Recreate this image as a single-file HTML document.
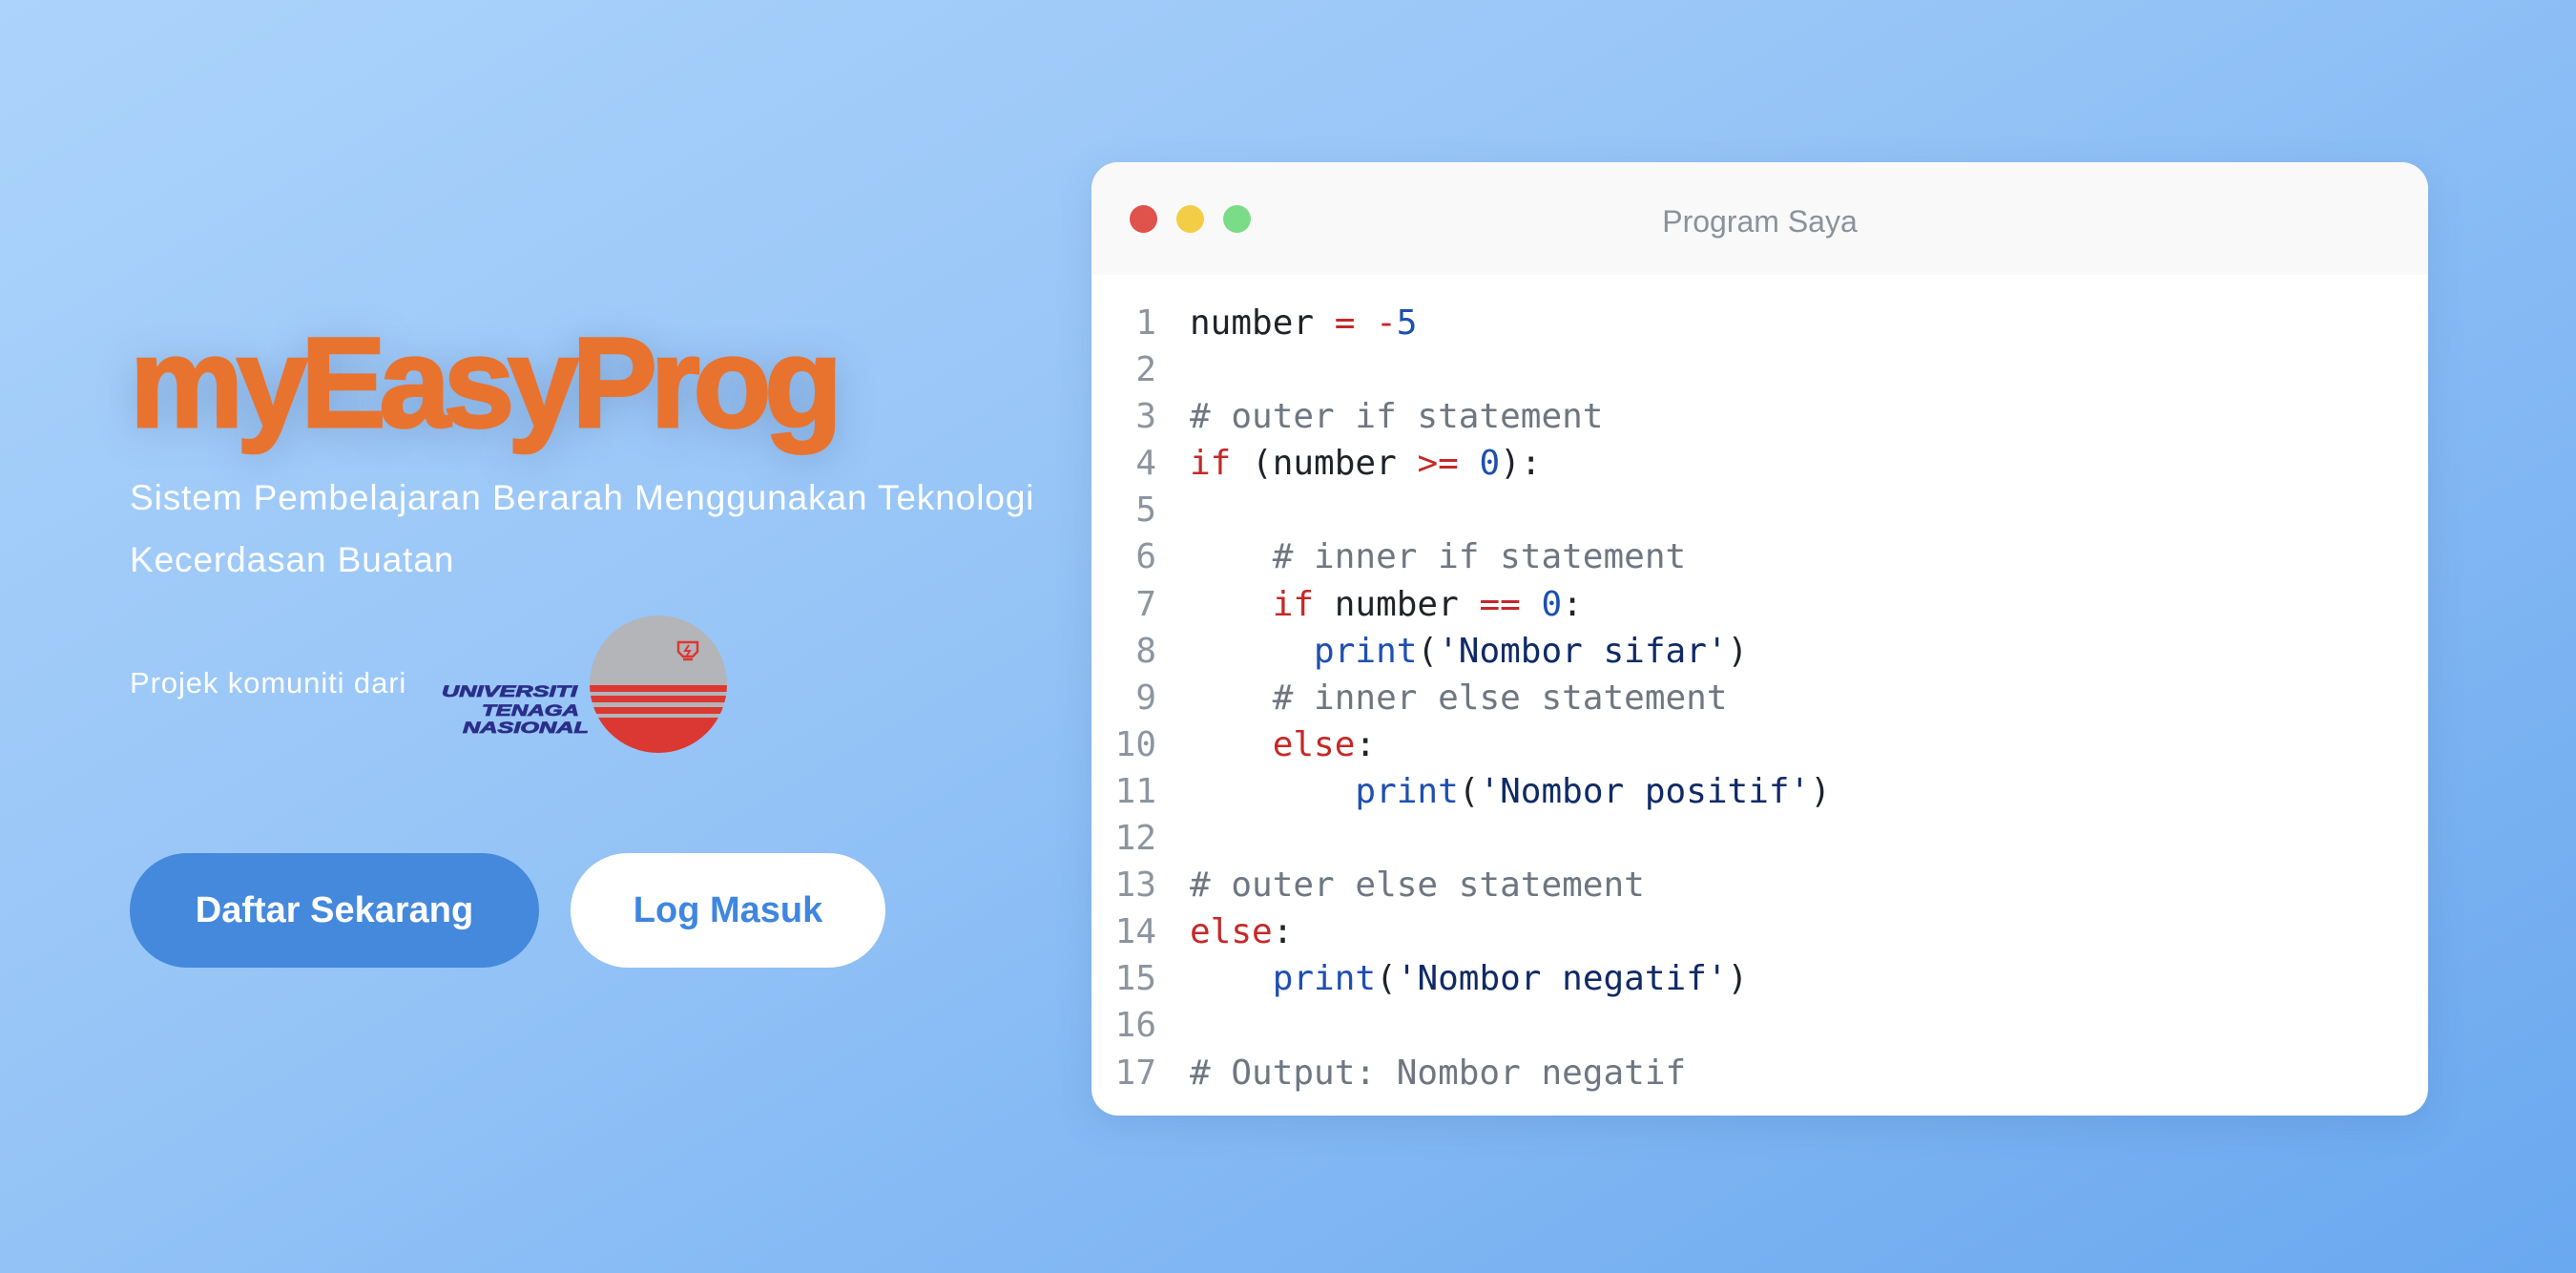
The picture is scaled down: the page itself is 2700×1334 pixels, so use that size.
<!DOCTYPE html>
<html><head><meta charset="utf-8"><style>
*{margin:0;padding:0;box-sizing:border-box}
html,body{width:2700px;height:1334px;overflow:hidden}
body{background:linear-gradient(150deg,#acd3fb 0%,#97c5f7 40%,#6aa8ef 100%);font-family:"Liberation Sans",sans-serif;position:relative}
.title{position:absolute;left:136px;top:322px;font-size:134px;font-weight:bold;color:#e8732f;letter-spacing:-7.2px;-webkit-text-stroke:3px #e8732f;text-shadow:0 6px 40px rgba(60,90,140,.35);line-height:160px}
.sub{position:absolute;left:136px;top:489px;font-size:37px;letter-spacing:0.9px;line-height:65px;color:#fff;width:1150px}
.proj{position:absolute;left:136px;top:698px;font-size:31px;letter-spacing:0.9px;color:#fff}
.btn{position:absolute;top:894px;height:120px;border-radius:60px;font-size:38px;font-weight:bold;display:flex;align-items:center;justify-content:center}
.b1{left:136px;width:429px;background:#4589dd;color:#fff}
.b2{left:598px;width:330px;background:#fff;color:#3f86e0}
.win{position:absolute;left:1144px;top:170px;width:1401px;height:999px;background:#fff;border-radius:28px;overflow:hidden;box-shadow:0 10px 40px rgba(40,80,140,.15)}
.hd{height:118px;background:#f9f9f9;position:relative}
.dot{position:absolute;top:45px;width:29px;height:29px;border-radius:50%}
.ht{position:absolute;left:0;right:0;top:44px;text-align:center;font-size:32px;color:#8a929e}
.code{position:absolute;top:314px;left:1144px;font-family:"DejaVu Sans Mono","Liberation Mono",monospace;font-size:36px;line-height:49.1px;color:#1f2328}
.ln{position:absolute;top:0;left:0;width:68px;text-align:right;color:#8c959f;white-space:pre}
.tx{position:absolute;top:0;left:103px;white-space:pre}
.k{color:#c62828}.n{color:#1d4fb0}.c{color:#6e7781}.f{color:#1f4fb0}.s{color:#0f2a66}
</style></head><body>
<div class="title">myEasyProg</div>
<div class="sub">Sistem Pembelajaran Berarah Menggunakan Teknologi<br>Kecerdasan Buatan</div>
<div class="proj">Projek komuniti dari</div>
<svg style="position:absolute;left:455px;top:640px" width="320" height="160" viewBox="455 640 320 160">
<defs><clipPath id="cc"><circle cx="690" cy="717" r="72"/></clipPath></defs>
<g clip-path="url(#cc)">
<rect x="600" y="640" width="180" height="160" fill="#b3b5b8"/>
<rect x="600" y="718" width="180" height="7" fill="#dc3833"/>
<rect x="600" y="729" width="180" height="7" fill="#dc3833"/>
<rect x="600" y="741" width="180" height="7" fill="#dc3833"/>
<rect x="600" y="752" width="180" height="50" fill="#dc3833"/>
</g>
<path d="M711 673h20v10l-5 5h-10l-5-5z M716 691h10" fill="none" stroke="#dc3833" stroke-width="2.5"/>
<path d="M722 676l-4 6h5l-3 5" fill="none" stroke="#dc3833" stroke-width="2"/>
<g font-family="Liberation Sans,sans-serif" font-weight="bold" font-style="italic" font-size="17" fill="#2b2f8a" stroke="#2b2f8a" stroke-width="0.8">
<text x="463" y="730" textLength="142" lengthAdjust="spacingAndGlyphs">UNIVERSITI</text>
<text x="505" y="750" textLength="102" lengthAdjust="spacingAndGlyphs">TENAGA</text>
<text x="485" y="768" textLength="132" lengthAdjust="spacingAndGlyphs">NASIONAL</text>
</g>
</svg>
<div class="btn b1">Daftar Sekarang</div>
<div class="btn b2">Log Masuk</div>
<div class="win">
<div class="hd">
<div class="dot" style="left:40px;background:#e0524c"></div>
<div class="dot" style="left:89px;background:#f4cd46"></div>
<div class="dot" style="left:138px;background:#7bdc88"></div>
<div class="ht">Program Saya</div>
</div>
</div>
<div class="code"><div class="ln">1
2
3
4
5
6
7
8
9
10
11
12
13
14
15
16
17</div><div class="tx">number <span class="k">=</span> <span class="k">-</span><span class="n">5</span>

<span class="c"># outer if statement</span>
<span class="k">if</span> (number <span class="k">&gt;=</span> <span class="n">0</span>):

    <span class="c"># inner if statement</span>
    <span class="k">if</span> number <span class="k">==</span> <span class="n">0</span>:
      <span class="f">print</span>(<span class="s">'Nombor sifar'</span>)
    <span class="c"># inner else statement</span>
    <span class="k">else</span>:
        <span class="f">print</span>(<span class="s">'Nombor positif'</span>)

<span class="c"># outer else statement</span>
<span class="k">else</span>:
    <span class="f">print</span>(<span class="s">'Nombor negatif'</span>)

<span class="c"># Output: Nombor negatif</span></div></div>
</body></html>
